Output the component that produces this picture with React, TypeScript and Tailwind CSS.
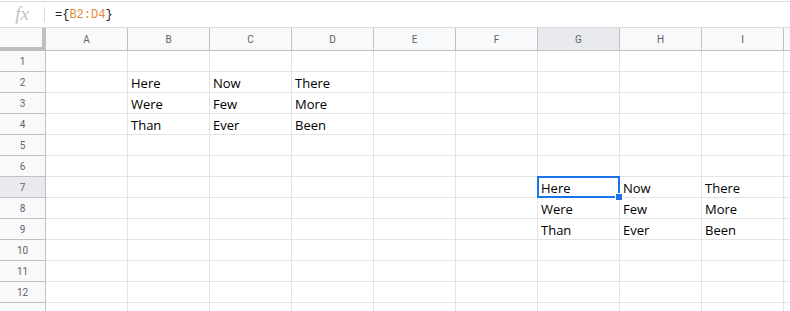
import React from 'react';

const columns = ['A', 'B', 'C', 'D', 'E', 'F', 'G', 'H', 'I'];
const rowCount = 12;

// cell values keyed by "col+row"
const cells: Record<string, string> = {
  B2: 'Here', C2: 'Now', D2: 'There',
  B3: 'Were', C3: 'Few', D3: 'More',
  B4: 'Than', C4: 'Ever', D4: 'Been',
  G7: 'Here', H7: 'Now', I7: 'There',
  G8: 'Were', H8: 'Few', I8: 'More',
  G9: 'Than', H9: 'Ever', I9: 'Been',
};

const activeCol = 'G';
const activeRow = 7;

const FormulaBar: React.FC = () => (
  <div className="flex items-center mt-px border-y border-[#dadce0] h-[27px] bg-white">
    <div className="flex justify-center items-center w-[44px] h-full">
      <span className="text-[#c4c4c4] text-[19px] italic" style={{ fontFamily: '"Liberation Serif", serif' }}>
        fx
      </span>
    </div>
    <div className="bg-[#dadce0] w-px h-[15px]" />
    <div className="pl-[10px] text-[12px] text-[#202124]" style={{ fontFamily: '"Liberation Mono", monospace' }}>
      ={'{'}<span className="text-[#e8893a]">B2:D4</span>{'}'}
    </div>
  </div>
);

const App: React.FC = () => {
  return (
    <div className="relative bg-white w-[790px] h-[311px] overflow-hidden" style={{ fontFamily: '"Open Sans", sans-serif' }}>
      <FormulaBar />

      <div className="grid grid-cols-[46px_repeat(9,82px)_82px] w-max">
        {/* header row */}
        <div className="bg-[#f8f9fa] border-r-4 border-b-4 border-[#c0c0c0] h-[23px]" />
        {columns.map((c) => (
          <div
            key={c}
            className={`flex justify-center items-center border-r border-b border-[#c0c0c0] h-[23px] text-[10px] text-[#5f6368] ${
              c === activeCol ? 'bg-[#e8eaed]' : 'bg-[#f8f9fa]'
            }`}
            style={{ fontFamily: 'Roboto, sans-serif' }}
          >
            {c}
          </div>
        ))}
        <div className="bg-[#f8f9fa] border-b border-[#c0c0c0] h-[23px]" />

        {Array.from({ length: rowCount + 1 }, (_, i) => i + 1).map((r) => (
          <React.Fragment key={r}>
            <div
              className={`flex justify-center items-center pt-px border-r border-b border-[#c0c0c0] h-[21px] text-[10px] text-[#5f6368] ${
                r === activeRow ? 'bg-[#e8eaed]' : 'bg-[#f8f9fa]'
              }`}
              style={{ fontFamily: 'Roboto, sans-serif' }}
            >
              {r <= rowCount ? r : ''}
            </div>
            {columns.map((c) => {
              const key = `${c}${r}`;
              const active = c === activeCol && r === activeRow;
              return (
                <div
                  key={key}
                  className="relative flex items-center border-r border-b border-[#e2e3e3] h-[21px] pt-[3px] pl-[3px] text-[13px] text-black"
                >
                  {cells[key]}
                  {active && (
                    <>
                      <div className="absolute -top-px -left-px -right-px -bottom-px z-10 border-2 border-[#1a73e8]" />
                      <div className="absolute -right-[4px] -bottom-[4px] z-10 bg-[#1a73e8] border border-white w-[8px] h-[8px]" />
                    </>
                  )}
                </div>
              );
            })}
            <div className="border-b border-[#e2e3e3] h-[21px]" />
          </React.Fragment>
        ))}
      </div>
    </div>
  );
};

export default App;
